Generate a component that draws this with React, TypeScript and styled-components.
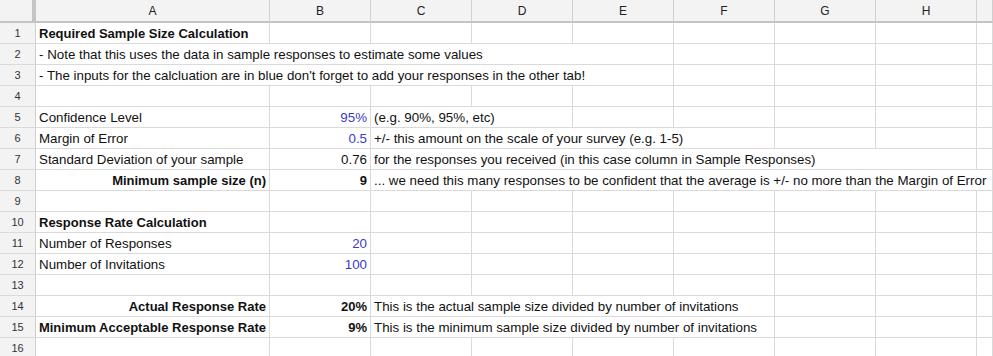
import React from 'react';
import styled, { createGlobalStyle } from 'styled-components';

const GlobalStyle = createGlobalStyle`
  html, body {
    margin: 0;
    padding: 0;
    background: #fff;
  }
  body {
    font-family: "Liberation Sans", Arial, sans-serif;
  }
`;

const COLUMNS = ['A', 'B', 'C', 'D', 'E', 'F', 'G', 'H', 'I'];

const Sheet = styled.div`
  width: 993px;
  height: 356px;
  overflow: hidden;
  display: grid;
  grid-template-columns: 36px 234px repeat(7, 101px) 1fr;
  grid-auto-rows: 21px;
  grid-template-rows: 23px;
  background: #fff;
`;

const Corner = styled.div`
  background: #f3f3f3;
  border-right: 4px solid #c4c4c4;
  border-bottom: 2px solid #c4c4c4;
  box-sizing: border-box;
`;

const ColHeader = styled.div`
  background: #f3f3f3;
  border-right: 1px solid #cfcfcf;
  border-bottom: 2px solid #c4c4c4;
  box-sizing: border-box;
  display: flex;
  align-items: center;
  justify-content: center;
  font-size: 12px;
  color: #222;
`;

const RowHeader = styled.div`
  background: #f3f3f3;
  border-right: 1px solid #cfcfcf;
  border-bottom: 1px solid #dadada;
  box-sizing: border-box;
  display: flex;
  align-items: center;
  justify-content: center;
  font-size: 11px;
  color: #333;
`;

const Cell = styled.div<{ $span: number; $align: 'left' | 'right'; $bold: boolean; $blue: boolean }>`
  grid-column: span ${(p) => p.$span};
  border-right: 1px solid #dadada;
  border-bottom: 1px solid #dadada;
  box-sizing: border-box;
  padding: 0 3px;
  display: flex;
  align-items: center;
  justify-content: ${(p) => (p.$align === 'right' ? 'flex-end' : 'flex-start')};
  white-space: nowrap;
  overflow: hidden;
  font-size: ${(p) => (p.$bold ? '13px' : '13.33px')};
  font-weight: ${(p) => (p.$bold ? 700 : 400)};
  color: ${(p) => (p.$blue ? '#3a3acf' : '#111')};
`;

type CellData = {
  text: string;
  span?: number;
  align?: 'left' | 'right';
  bold?: boolean;
  blue?: boolean;
};

type RowData = Record<number, CellData>;

// overflowing text spans the cells it runs into, as the sheet hides those gridlines
const rows: RowData[] = [
  { 0: { text: 'Required Sample Size Calculation', bold: true } },
  { 0: { text: '- Note that this uses the data in sample responses to estimate some values', span: 5 } },
  {
    0: {
      text: "- The inputs for the calcluation are in blue don't forget to add your responses in the other tab!",
      span: 5,
    },
  },
  {},
  {
    0: { text: 'Confidence Level' },
    1: { text: '95%', align: 'right', blue: true },
    2: { text: '(e.g. 90%, 95%, etc)', span: 2 },
  },
  {
    0: { text: 'Margin of Error' },
    1: { text: '0.5', align: 'right', blue: true },
    2: { text: '+/- this amount on the scale of your survey (e.g. 1-5)', span: 4 },
  },
  {
    0: { text: 'Standard Deviation of your sample' },
    1: { text: '0.76', align: 'right' },
    2: { text: 'for the responses you received (in this case column in Sample Responses)', span: 6 },
  },
  {
    0: { text: 'Minimum sample size (n)', align: 'right', bold: true },
    1: { text: '9', align: 'right', bold: true },
    2: {
      text: '... we need this many responses to be confident that the average is +/- no more than the Margin of Error',
      span: 7,
    },
  },
  {},
  { 0: { text: 'Response Rate Calculation', bold: true } },
  {
    0: { text: 'Number of Responses' },
    1: { text: '20', align: 'right', blue: true },
  },
  {
    0: { text: 'Number of Invitations' },
    1: { text: '100', align: 'right', blue: true },
  },
  {},
  {
    0: { text: 'Actual Response Rate', align: 'right', bold: true },
    1: { text: '20%', align: 'right', bold: true },
    2: { text: 'This is the actual sample size divided by number of invitations', span: 4 },
  },
  {
    0: { text: 'Minimum Acceptable Response Rate', align: 'right', bold: true },
    1: { text: '9%', align: 'right', bold: true },
    2: { text: 'This is the minimum sample size divided by number of invitations', span: 4 },
  },
  {},
];

const renderRow = (row: RowData, index: number) => {
  const cells: React.ReactNode[] = [
    <RowHeader key={`h${index}`}>{index + 1}</RowHeader>,
  ];
  let c = 0;
  while (c < COLUMNS.length) {
    const data = row[c];
    const span = data?.span ?? 1;
    cells.push(
      <Cell
        key={`${index}-${c}`}
        $span={span}
        $align={data?.align ?? 'left'}
        $bold={!!data?.bold}
        $blue={!!data?.blue}
      >
        {data?.text}
      </Cell>
    );
    c += span;
  }
  return cells;
};

const App: React.FC = () => {
  return (
    <>
      <GlobalStyle />
      <Sheet>
        <Corner />
        {COLUMNS.map((col) => (
          <ColHeader key={col}>{col === 'I' ? '' : col}</ColHeader>
        ))}
        {rows.map(renderRow)}
      </Sheet>
    </>
  );
};

export default App;
